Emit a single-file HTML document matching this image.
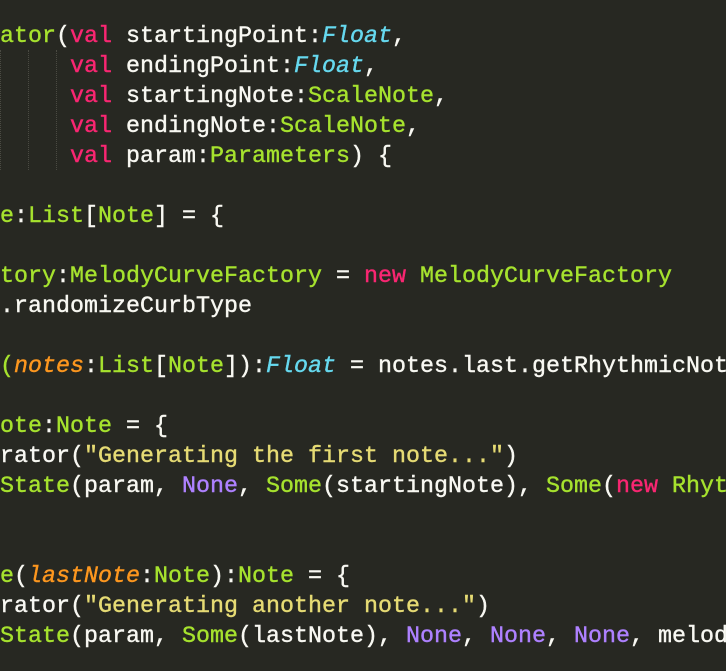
<!DOCTYPE html>
<html><head><style>
html,body{margin:0;padding:0;background:#272822;width:726px;height:671px;overflow:hidden}
.c{position:absolute;left:0;top:22px;font-family:"Liberation Mono",monospace;font-size:23.33px;line-height:30px;color:#f8f8f2;white-space:pre;-webkit-text-stroke:0.4px currentColor}
.k{color:#f92672}.g{color:#a6e22e}.t{color:#66d9ef;font-style:italic}.s{color:#e6db74}.o{color:#fd971f;font-style:italic}.p{color:#ae81ff}
.gd{position:absolute;top:50px;height:120px;border-left:1px dotted #4a4a42}
</style></head><body>
<div class="gd" style="left:0"></div><div class="gd" style="left:28px"></div><div class="gd" style="left:56px"></div>
<div class="c"><span class="g">ator</span>(<span class="k">val</span> startingPoint:<span class="t">Float</span>,
     <span class="k">val</span> endingPoint:<span class="t">Float</span>,
     <span class="k">val</span> startingNote:<span class="g">ScaleNote</span>,
     <span class="k">val</span> endingNote:<span class="g">ScaleNote</span>,
     <span class="k">val</span> param:<span class="g">Parameters</span>) {

<span class="g">e</span>:<span class="g">List</span>[<span class="g">Note</span>] = {

<span class="g">tory</span>:<span class="g">MelodyCurveFactory</span> = <span class="k">new</span> <span class="g">MelodyCurveFactory</span>
.randomizeCurbType

<span class="g">(</span><span class="o">notes</span>:<span class="g">List</span>[<span class="g">Note</span>]):<span class="t">Float</span> = notes.last.getRhythmicNot

<span class="g">ote</span>:<span class="g">Note</span> = {
rator(<span class="s">"Generating the first note..."</span>)
<span class="g">State</span>(param, <span class="p">None</span>, <span class="g">Some</span>(startingNote), <span class="g">Some</span>(<span class="k">new</span> <span class="g">Rhyt</span>


<span class="g">e</span>(<span class="o">lastNote</span>:<span class="g">Note</span>):<span class="g">Note</span> = {
rator(<span class="s">"Generating another note..."</span>)
<span class="g">State</span>(param, <span class="g">Some</span>(lastNote), <span class="p">None</span>, <span class="p">None</span>, <span class="p">None</span>, melod</div>
</body></html>
